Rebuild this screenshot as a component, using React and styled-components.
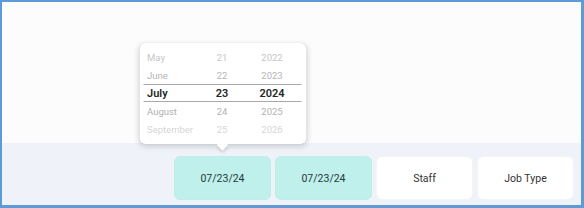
import React from "react";
import styled, { createGlobalStyle } from "styled-components";

const Global = createGlobalStyle`
  html, body { margin: 0; padding: 0; }
  body { font-family: Roboto, "Liberation Sans", sans-serif; background: #fff; }
`;

const Frame = styled.div`
  width: 584px;
  height: 208px;
  box-sizing: border-box;
  border-style: solid;
  border-color: #5c9bd8;
  border-width: 2px 3px 3px 2px;
  display: flex;
  flex-direction: column;
  background: #fcfcfd;
  overflow: hidden;
`;

const Canvas = styled.div`
  flex: 0 0 141px;
  background: #fcfcfd;
`;

const Bar = styled.div`
  flex: 1;
  background: #eff2f8;
  display: flex;
  justify-content: flex-end;
  align-items: flex-start;
  gap: 4px;
  padding: 13px 7px 0 0;
`;

const Anchor = styled.div`
  position: relative;
`;

const Chip = styled.button`
  width: 97px;
  height: 44px;
  border: 1px solid ${(p) => (p.$active ? "#bdeee8" : "#f2f4f7")};
  border-radius: 6px;
  background: ${(p) => (p.$active ? "#c0f0eb" : "#ffffff")};
  color: ${(p) => (p.$active ? "#24393a" : "#333")};
  font-family: Roboto, "Liberation Sans", sans-serif;
  font-size: 10.5px;
  display: flex;
  align-items: center;
  justify-content: center;
  padding: 0;
`;

const Popover = styled.div`
  position: absolute;
  bottom: calc(100% + 12px);
  left: 50%;
  transform: translateX(-50%);
  width: 167px;
  height: 101px;
  box-sizing: border-box;
  background: #fff;
  border-radius: 6px;
  box-shadow: 0 2px 6px rgba(0, 0, 0, 0.18), 0 0 1px rgba(0, 0, 0, 0.12);
  padding: 5px 0 6px;
  display: flex;
  flex-direction: column;

  &::after {
    content: "";
    position: absolute;
    left: 50%;
    bottom: -5px;
    width: 8px;
    height: 8px;
    background: #fff;
    transform: translateX(-50%) rotate(45deg);
    box-shadow: 2px 2px 3px rgba(0, 0, 0, 0.12);
  }
`;

const Row = styled.div`
  position: relative;
  height: 18px;
  display: grid;
  grid-template-columns: 45px 40px 40px;
  column-gap: 10px;
  align-items: center;
  padding-left: 8px;
  font-size: ${(p) => (p.$selected ? "11px" : "9.5px")};
  font-weight: ${(p) => (p.$selected ? 600 : 400)};
  color: ${(p) => p.$color};

  ${(p) =>
    p.$selected &&
    `
    &::before {
      content: "";
      position: absolute;
      left: 4px;
      right: 5px;
      top: 0;
      bottom: 0;
      border-top: 1px solid #a9a9a9;
      border-bottom: 1px solid #a9a9a9;
    }
  `}
`;

const Month = styled.span`
  text-align: left;
  white-space: nowrap;
`;

const Num = styled.span`
  text-align: center;
`;

const rows = [
  { m: "May", d: "21", y: "2022", c: "#c6c6c6" },
  { m: "June", d: "22", y: "2023", c: "#b6b6b6" },
  { m: "July", d: "23", y: "2024", c: "#262626", sel: true },
  { m: "August", d: "24", y: "2025", c: "#b1b1b1" },
  { m: "September", d: "25", y: "2026", c: "#d6d6d6" },
];

export default function App() {
  return (
    <>
      <Global />
      <Frame>
        <Canvas />
        <Bar>
          <Anchor>
            <Chip $active>07/23/24</Chip>
            <Popover>
              {rows.map((r) => (
                <Row key={r.m} $selected={r.sel} $color={r.c}>
                  <Month>{r.m}</Month>
                  <Num>{r.d}</Num>
                  <Num>{r.y}</Num>
                </Row>
              ))}
            </Popover>
          </Anchor>
          <Chip $active>07/23/24</Chip>
          <Chip>Staff</Chip>
          <Chip>Job Type</Chip>
        </Bar>
      </Frame>
    </>
  );
}
